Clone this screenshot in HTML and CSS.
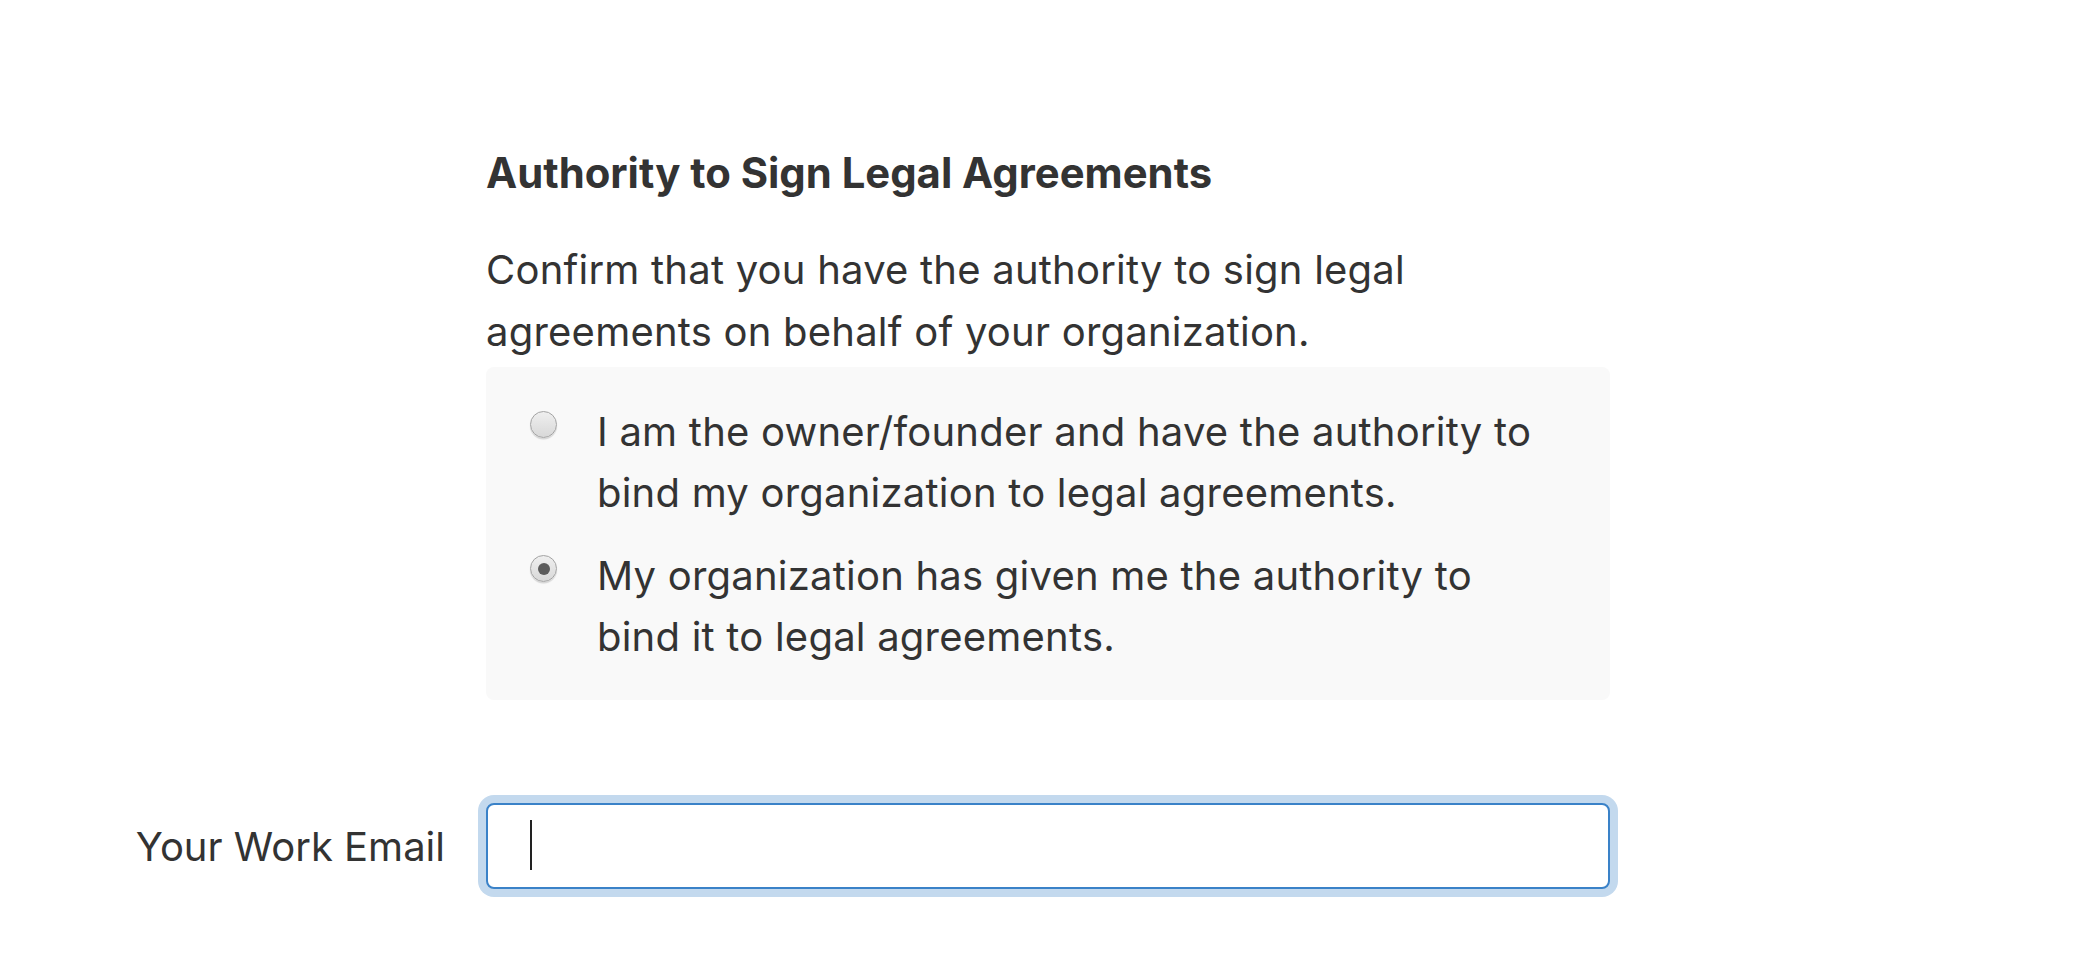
FILE: index.html
```html
<!DOCTYPE html>
<html lang="en">
<head>
<meta charset="utf-8">
<title>Authority to Sign Legal Agreements</title>
<link rel="stylesheet" href="styles.css">
</head>
<body>
<main class="form">
  <section class="row">
    <div class="row-label"></div>
    <div class="row-field">
      <h2 class="title">Authority to Sign Legal Agreements</h2>
      <p class="desc">Confirm that you have the authority to sign legal agreements on behalf of your organization.</p>
      <div class="options">
        <label class="option">
          <input class="radio" type="radio" name="authority">
          <span class="option-text">I am the owner/founder and have the authority to bind my organization to legal agreements.</span>
        </label>
        <label class="option">
          <input class="radio" type="radio" name="authority" checked>
          <span class="option-text">My organization has given me the authority to bind it to legal agreements.</span>
        </label>
      </div>
    </div>
  </section>
  <section class="row row-email">
    <label class="row-label" for="email">Your Work Email</label>
    <div class="row-field">
      <div class="input-wrap">
        <input id="email" class="text-input is-focused" type="email">
        <span class="caret"></span>
      </div>
    </div>
  </section>
</main>
</body>
</html>
```
FILE: styles.css
```css
* { box-sizing: border-box; }
body {
  margin: 0;
  background: #fff;
  color: #333;
  font-family: Inter, "Noto Sans", sans-serif;
  font-size: 40px;
}
.form {
  padding: 148px 0 60px;
}
.row {
  display: grid;
  grid-template-columns: 445px 1124px;
  column-gap: 41px;
}
.row-label {
  text-align: right;
  line-height: 61px;
}
.title {
  margin: 0;
  font-size: 41.8px;
  font-weight: 700;
  line-height: 50px;
}
.desc {
  margin: 41px 0 0;
  line-height: 62px;
  letter-spacing: 0.22px;
}
.options {
  margin-top: 4px;
  background: #f9f9f9;
  border-radius: 8px;
  padding: 34px 60px 33px 44px;
  display: flex;
  flex-direction: column;
  gap: 22px;
}
.option {
  display: flex;
  align-items: flex-start;
  gap: 40px;
  line-height: 61px;
  letter-spacing: 0.22px;
}
.radio {
  appearance: none;
  -webkit-appearance: none;
  margin: 10px 0 0;
  flex: none;
  width: 27px;
  height: 27px;
  border-radius: 50%;
  border: 1px solid #a3a3a3;
  background: linear-gradient(#efefef, #d8d8d8);
  box-shadow: 0 1.5px 1px rgba(0,0,0,0.14);
  position: relative;
}
.radio:checked::after {
  content: "";
  position: absolute;
  left: 50%;
  top: 50%;
  width: 12px;
  height: 12px;
  margin: -6px 0 0 -6px;
  border-radius: 50%;
  background: #5b5b5b;
}
.row-email {
  margin-top: 103px;
  align-items: center;
}
.input-wrap {
  position: relative;
}
.text-input {
  display: block;
  width: 100%;
  height: 86px;
  margin: 0;
  border: 2px solid #3a82c8;
  border-radius: 8px;
  padding: 0 42px;
  font: inherit;
  color: #333;
  outline: none;
  background: #fff;
}
.text-input.is-focused {
  box-shadow: 0 0 0 8px #c3d9ee;
}
.caret {
  position: absolute;
  left: 44px;
  top: 17px;
  width: 2px;
  height: 50px;
  background: #222;
}
```
